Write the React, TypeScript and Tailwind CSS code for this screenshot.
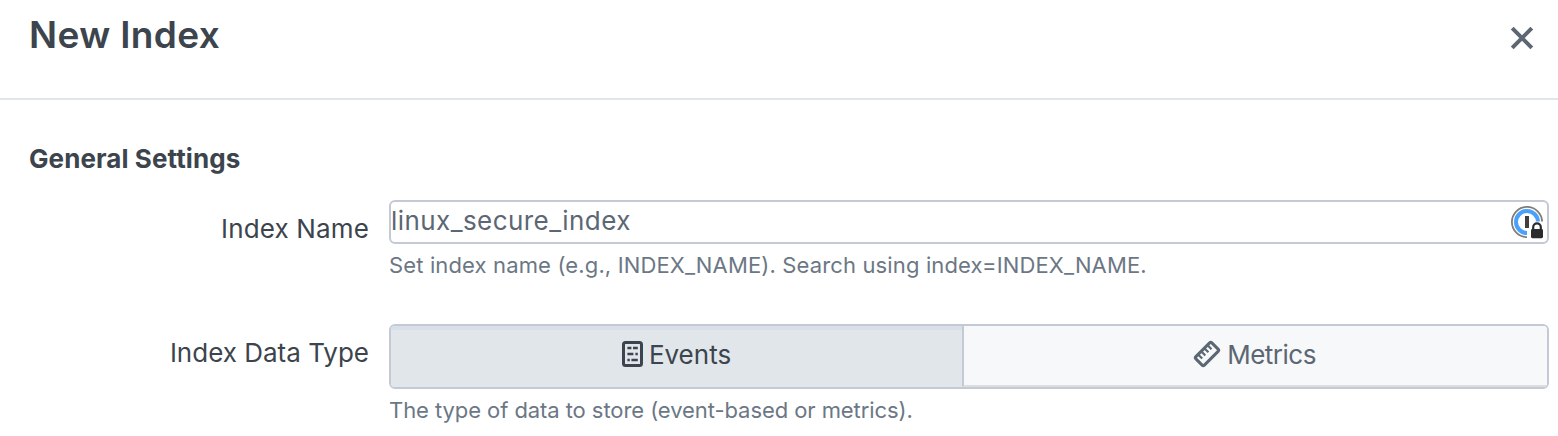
import type { ReactNode } from 'react';

function CloseIcon() {
  return (
    <svg width="24" height="24" viewBox="0 0 24 24" fill="none" stroke="#5c6773" strokeWidth="4" strokeLinecap="butt">
      <path d="M2.2 2.2 21.8 21.8M21.8 2.2 2.2 21.8" />
    </svg>
  );
}

function PasswordManagerIcon() {
  return (
    <svg width="34" height="34" viewBox="0 0 34 34" fill="none">
      <circle cx="17" cy="17" r="15.1" stroke="#7d7d7d" strokeWidth="1.8" />
      <circle cx="17" cy="17" r="11" stroke="#4ba0fb" strokeWidth="4" />
      <rect x="15" y="11" width="4" height="12" fill="#404040" />
      <path d="M17 34V25.5L20.5 22.5V20L24 16.5H34V34Z" fill="#fff" />
      <path d="M23.2 25V22.2a3.8 3.8 0 0 1 7.6 0V25" stroke="#2b2b2d" strokeWidth="2.2" />
      <rect x="21" y="24" width="12" height="9.2" rx="1.4" fill="#2b2b2d" />
    </svg>
  );
}

function EventsIcon() {
  return (
    <svg width="22" height="26" viewBox="0 0 22 26" fill="none" stroke="#3c444d">
      <rect x="1.5" y="1.5" width="18" height="23" rx="2" strokeWidth="3" />
      <path d="M5.4 7h4M11 7h4.8M5.4 13h6M13.4 13h2.4M5.4 19h2.4M9.4 19h6.4" strokeWidth="2.6" />
    </svg>
  );
}

function MetricsIcon() {
  return (
    <svg width="28" height="28" viewBox="0 0 28 28" fill="none" stroke="#5c6773" strokeWidth="3">
      <g transform="rotate(-45 14 14)">
        <rect x="2.7" y="8" width="22.6" height="12" rx="1.6" />
        <path d="M7.4 8v5.8M11.8 8v5.8M16.2 8v5.8M20.6 8v5.8" strokeWidth="2.2" />
      </g>
    </svg>
  );
}

function Field({ label, children }: { label: ReactNode; children: ReactNode }) {
  return (
    <div className="flex">
      <div className="w-[369px] shrink-0 text-right text-[26px] leading-[57px] text-[#3c444d]">{label}</div>
      <div className="ml-5 w-[1160px] shrink-0">{children}</div>
    </div>
  );
}

export default function App() {
  return (
    <div className="h-[436px] w-[1558px] overflow-hidden bg-white font-['Inter',sans-serif] whitespace-nowrap text-[#3c444d]">
      <header className="flex h-[100px] justify-between border-b-2 border-[#e1e6eb] pr-6 pl-[29px]">
        <h1 className="pt-3 text-[37px] leading-[45px] font-semibold tracking-[0.36px]">New Index</h1>
        <button aria-label="Close" className="mt-[26px] h-6 w-6"><CloseIcon /></button>
      </header>
      <main>
        <h2 className="h-[100px] pt-11 pl-[29px] text-[26px] leading-[30px] font-bold tracking-[0.08px]">General Settings</h2>
        <div className="h-[124px]">
          <Field label={<span className="tracking-[0.15px]">Index Name</span>}>
            <div className="flex h-11 items-start justify-between rounded-md border-2 border-[#c3cad6] pr-[3px]">
              <span className="text-[26px] leading-[37px] tracking-[0.43px] text-[#5c6773]">linux_secure_index</span>
              <span className="mt-[3px]"><PasswordManagerIcon /></span>
            </div>
            <p className="pt-[6px] text-[22px] leading-[30px] tracking-[0.14px] text-[#6b7785]">Set index name (e.g., INDEX_NAME). Search using index=INDEX_NAME.</p>
          </Field>
        </div>
        <Field label={<span>Index Data Type</span>}>
          <div className="flex h-[65px] overflow-hidden rounded-md border-2 border-[#c3cad6] text-[26px]">
            <button className="flex w-[571px] items-start justify-center gap-[5px] border-t-4 border-[#d9dfe8] bg-[#e1e6eb]">
              <span className="mt-[11px]"><EventsIcon /></span>
              <span className="mt-[10px] leading-[30px]">Events</span>
            </button>
            <button className="flex flex-1 items-start justify-center gap-[6px] border-b-2 border-l-2 border-b-[#dcdddf] border-l-[#c3cad6] bg-[#f7f8fa] pr-[2px] text-[#5c6773]">
              <span className="mt-[14px]"><MetricsIcon /></span>
              <span className="mt-[14px] leading-[30px] tracking-[-0.5px]">Metrics</span>
            </button>
          </div>
          <p className="pt-[6px] text-[22px] leading-[30px] tracking-[-0.07px] text-[#6b7785]">The type of data to store (event-based or metrics).</p>
        </Field>
      </main>
    </div>
  );
}
